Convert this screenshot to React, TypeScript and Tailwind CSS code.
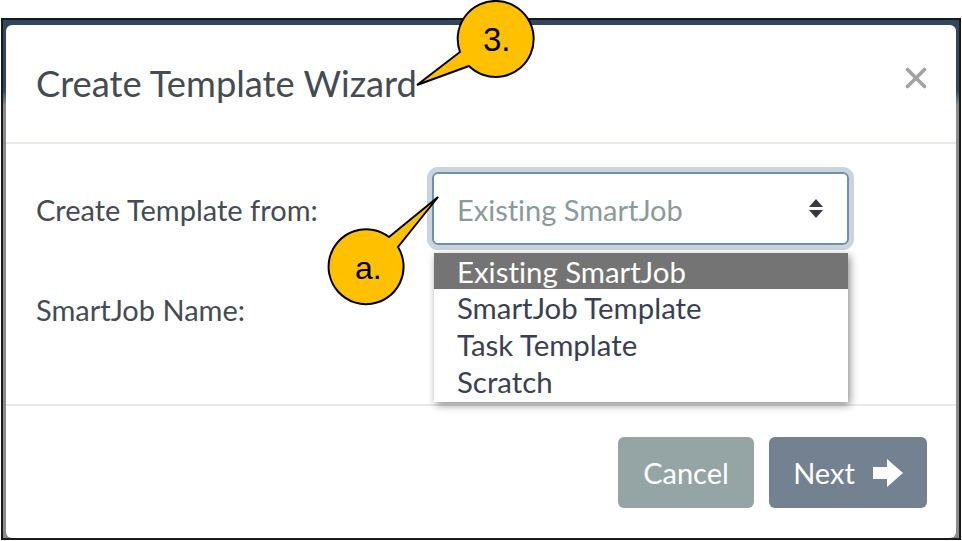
import React from "react";
import { X } from "lucide-react";

const Callout: React.FC<{ path: string; className: string }> = ({ path, className }) => (
  <svg className={className} viewBox="0 0 120 120">
    <path d={path} fill="#ffc000" stroke="#000" strokeWidth="2" strokeLinejoin="miter" />
  </svg>
);

export default function App() {
  return (
    <div className="relative w-[962px] h-[541px] bg-white overflow-hidden font-['Lato','Open_Sans',sans-serif] [font-variant-ligatures:none]">
      <div className="pt-[18px] pl-px">
        {/* Dark page edge behind the modal */}
        <div className="w-[960px] h-[522px] border-2 border-[#1a1a1a] bg-[linear-gradient(to_bottom,#2f475f_0,#2f475f_70px,#8a8a8a_85px)] pt-[5px] px-[3px]">
          <div className="bg-white rounded-[6px] h-[513px] flex flex-col">
            {/* Header */}
            <div className="h-[119px] shrink-0 border-b-2 border-[#e6e9ed] flex items-center justify-between pl-[30px] pr-[23px]">
              <h1 className="text-[36.3px] leading-none font-normal text-[#454b52]">
                Create Template Wizard
              </h1>
              <X className="w-[34px] h-[34px] text-[#a3a3a3] -mt-[11px]" strokeWidth={2.6} />
            </div>

            {/* Form */}
            <div className="h-[262px] shrink-0 border-b-2 border-[#e6e9ed] pl-[30px] pt-[28px]">
              <div className="flex items-center">
                <label className="w-[396px] text-[29px] leading-[35px] pt-px text-[#454b52]">
                  Create Template from:
                </label>
                <div className="w-[417px] h-[73px] rounded-[6px] border-2 border-[#6b8fb5] shadow-[0_0_0_5px_#ccd4db] flex items-center justify-between pl-[23px] pr-[24px]">
                  <span className="text-[29px] leading-[35px] pt-px text-[#8b9a9a]">Existing SmartJob</span>
                  <svg className="w-[14px] h-[19px]" viewBox="0 0 14 19">
                    <path d="M7 0 L14 8 H0 Z M0 11 H14 L7 19 Z" fill="#343a40" />
                  </svg>
                </div>
              </div>
              <div className="mt-[47px] text-[29px] leading-[35px] text-[#454b52]">SmartJob Name:</div>
            </div>

            {/* Footer */}
            <div className="flex-1 flex justify-end items-start gap-[15px] pt-[31px] pr-[29px]">
              <button className="w-[136px] h-[71px] rounded-[6px] bg-[#95a5a6] text-white text-[29px] flex items-center justify-center">
                Cancel
              </button>
              <button className="w-[158px] h-[71px] rounded-[6px] bg-[#748190] text-white text-[29px] flex items-center justify-center gap-[18px]">
                Next
                <svg className="w-[30px] h-[30px]" viewBox="0 0 30 30">
                  <path d="M0 9 H14 V1 L30 15 L14 29 V21 H0 Z" fill="#fff" />
                </svg>
              </button>
            </div>
          </div>
        </div>
      </div>

      {/* Open select list */}
      <div className="absolute left-[434px] top-[253px] w-[414px] h-[149px] bg-white shadow-[2px_3px_8px_rgba(0,0,0,0.45)] text-[29.4px] leading-[37px] text-[#3b3f52]">
        <div className="h-[36px] bg-[#747474] text-white pl-[23px]">Existing SmartJob</div>
        <div className="pl-[23px]">SmartJob Template</div>
        <div className="pl-[23px]">Task Template</div>
        <div className="pl-[23px]">Scratch</div>
      </div>

      {/* Callouts */}
      <Callout
        className="absolute left-[415px] top-0 w-[120px] h-[120px]"
        path="M45 52 A38 38 0 1 1 54 66 L2 85 Z"
      />
      <div className="absolute left-[483px] top-[23px] text-[33px] leading-none text-black font-['Liberation_Sans',sans-serif]">
        3.
      </div>
      <Callout
        className="absolute left-[321px] top-[190px] w-[120px] h-[120px]"
        path="M117 7 L68 47 A37.5 37.5 0 1 0 77 57 Z"
      />
      <div className="absolute left-[355px] top-[252px] text-[32px] leading-none text-black font-['Liberation_Sans',sans-serif]">
        a.
      </div>
    </div>
  );
}
